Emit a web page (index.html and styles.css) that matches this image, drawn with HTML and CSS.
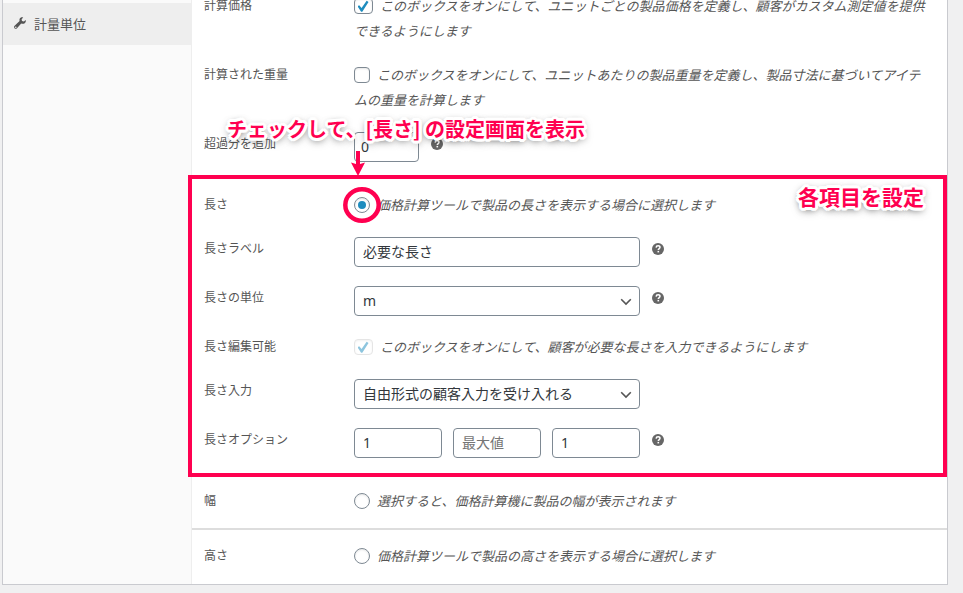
FILE: index.html
```html
<!DOCTYPE html>
<html lang="ja">
<head>
<meta charset="utf-8">
<title>計量単位</title>
<link rel="stylesheet" href="styles.css">
</head>
<body>
<svg class="defs" aria-hidden="true">
  <symbol id="help" viewBox="0 0 12 12">
    <circle cx="6" cy="6" r="6" fill="#666"/>
    <path d="M4.1 4.6C4.2 3.3 5 2.8 6.1 2.8c1.1 0 1.9.6 1.9 1.5C8 5.600 6.300 5.500 6.300 7" fill="none" stroke="#fff" stroke-width="1.500"/>
    <rect x="5.500" y="7.900" width="1.600" height="1.500" fill="#fff"/>
  </symbol>
  <symbol id="chevron" viewBox="0 0 12 8">
    <path d="M1.200 1.200L6 6l4.800-4.800" fill="none" stroke="#555" stroke-width="1.600"/>
  </symbol>
</svg>
<div class="panel">
  <nav class="tabs">
    <a class="tab" href="#measurement">
      <svg class="tab-icon" viewBox="0 0 12 12" aria-hidden="true">
        <path d="M11.700 3.100L9.900 4.600 8 4.100 7.600 2.300 9.200.500C7.900-.100 6.300.400 5.700 1.700c-.300.700-.300 1.500-.100 2.200L.600 8.800c-.700.700-.700 1.700-.100 2.400.700.700 1.800.700 2.500 0L7.200 6.500c1.200.600 2.800.400 3.800-.600.800-.800 1-1.900.700-2.800zM2.300 10.700a.7.7 0 1 1-1-1 .7.7 0 0 1 1 1z" fill="#555" fill-rule="evenodd"/>
      </svg>
      <span>計量単位</span>
    </a>
  </nav>
  <form class="main" id="measurement">
    <section class="group group-first">
      <div class="row">
        <label class="name" for="calc-price">計算価格</label>
        <div class="field"><input class="check check-wide" type="checkbox" id="calc-price" checked><span class="desc">このボックスをオンにして、ユニットごとの製品価格を定義し、顧客がカスタム測定値を提供できるようにします</span></div>
      </div>
      <div class="row">
        <label class="name" for="calc-weight">計算された重量</label>
        <div class="field"><input class="check" type="checkbox" id="calc-weight"><span class="desc">このボックスをオンにして、ユニットあたりの製品重量を定義し、製品寸法に基づいてアイテムの重量を計算します</span></div>
      </div>
      <div class="row">
        <label class="name" for="overage">超過分を追加</label>
        <div class="field controls">
          <input class="text text-short" type="text" id="overage" value="0">
          <svg class="help" aria-hidden="true"><use href="#help"/></svg>
        </div>
      </div>
    </section>

    <section class="group group-marked">
      <div class="row">
        <label class="name" for="length">長さ</label>
        <div class="field radio-field"><input class="radio" type="radio" name="dimension" id="length" checked><span class="desc">価格計算ツールで製品の長さを表示する場合に選択します</span>
          <svg class="ring" viewBox="0 0 38 36" aria-hidden="true"><ellipse cx="19" cy="18" rx="16.700" ry="15.700" fill="none" stroke="#ff0050" stroke-width="4.500"/></svg>
        </div>
      </div>
      <div class="row">
        <label class="name" for="length-label">長さラベル</label>
        <div class="field controls">
          <input class="text text-full" type="text" id="length-label" value="必要な長さ">
          <svg class="help" aria-hidden="true"><use href="#help"/></svg>
        </div>
      </div>
      <div class="row">
        <label class="name" for="length-unit">長さの単位</label>
        <div class="field controls">
          <span class="select-box"><select class="text text-full" id="length-unit"><option>m</option></select><svg class="chevron" aria-hidden="true"><use href="#chevron"/></svg></span>
          <svg class="help" aria-hidden="true"><use href="#help"/></svg>
        </div>
      </div>
      <div class="row">
        <label class="name" for="length-editable">長さ編集可能</label>
        <div class="field"><input class="check check-wide" type="checkbox" id="length-editable" checked disabled><span class="desc">このボックスをオンにして、顧客が必要な長さを入力できるようにします</span></div>
      </div>
      <div class="row">
        <label class="name" for="length-input">長さ入力</label>
        <div class="field controls">
          <span class="select-box"><select class="text text-full" id="length-input"><option>自由形式の顧客入力を受け入れる</option></select><svg class="chevron" aria-hidden="true"><use href="#chevron"/></svg></span>
        </div>
      </div>
      <div class="row">
        <label class="name" for="length-min">長さオプション</label>
        <div class="field controls">
          <span class="trio">
            <input class="text" type="text" id="length-min" value="1">
            <input class="text" type="text" aria-label="最大値" placeholder="最大値">
            <input class="text" type="text" aria-label="増分" value="1">
          </span>
          <svg class="help" aria-hidden="true"><use href="#help"/></svg>
        </div>
      </div>
      <p class="note note-check">チェックして、[長さ] の設定画面を表示</p>
      <svg class="arrow" viewBox="0 0 16 26" aria-hidden="true"><path d="M6 1h4v13l5-1.500-7 13.500-7-13.500L6 14z" fill="#ff0050"/></svg>
      <p class="note note-items">各項目を設定</p>
    </section>

    <section class="group group-single">
      <div class="row">
        <label class="name" for="width">幅</label>
        <div class="field"><input class="radio" type="radio" name="dimension" id="width"><span class="desc">選択すると、価格計算機に製品の幅が表示されます</span></div>
      </div>
    </section>

    <section class="group group-single">
      <div class="row">
        <label class="name" for="height">高さ</label>
        <div class="field"><input class="radio" type="radio" name="dimension" id="height"><span class="desc">価格計算ツールで製品の高さを表示する場合に選択します</span></div>
      </div>
    </section>
  </form>
</div>
</body>
</html>
```

FILE: styles.css
```css
* {
  box-sizing: border-box;
}

body {
  margin: 0;
  background: #f0f0f1;
  color: #555;
  font-family: "Noto Sans", "Noto Sans CJK JP", sans-serif;
  font-size: 12px;
}

.defs {
  position: absolute;
  width: 0;
  height: 0;
}

.panel {
  display: flex;
  margin: 0 15px 8px 2px;
  border: 1px solid #c9cacf;
  border-top: 0;
  background: #fff;
}

/* Sidebar */
.tabs {
  flex: 0 0 189px;
  padding-top: 3px;
  border-right: 1px solid #eee;
  background: #fafafa;
}

.tab {
  display: flex;
  align-items: center;
  gap: 8px;
  height: 42px;
  margin-right: -1px;
  padding: 0 0 2px 11px;
  background: #eee;
  color: #555;
  font-size: 13px;
  text-decoration: none;
}

.tab-icon {
  width: 12px;
  height: 12px;
}

/* Option groups */
.main {
  flex: 1;
  min-width: 0;
  padding-bottom: 1px;
}

.group {
  display: flex;
  flex-direction: column;
  gap: 19px;
  padding: 14px 20px 15px 12px;
  border-bottom: 2px solid #ddd;
}

.group-first {
  margin-top: -6px;
  padding-top: 0;
}

.group-single {
  padding-bottom: 14px;
}

.group:last-child {
  border-bottom: 0;
}

.row {
  display: grid;
  grid-template-columns: 150px 1fr;
}

.name {
  line-height: 24px;
}

.field {
  line-height: 25px;
}

.desc {
  font-size: 13px;
  font-style: italic;
}

.controls {
  display: flex;
  gap: 12px;
}

.help {
  width: 12px;
  height: 12px;
  margin-top: 6px;
}

/* Controls */
.text {
  width: 100%;
  height: 30px;
  margin: 0;
  padding: 0 8px 2px;
  border: 1px solid #7e8993;
  border-radius: 4px;
  background: #fff;
  color: #32373c;
  font-family: inherit;
  font-size: 14px;
  appearance: none;
}

.text::placeholder {
  color: #757575;
  opacity: 1;
}

.text-short {
  width: 65px;
  padding: 0 6px 2px;
}

.text-full,
.select-box,
.trio {
  width: 286px;
}

.select-box {
  position: relative;
  height: 30px;
  line-height: 0;
}

.chevron {
  position: absolute;
  top: 12px;
  right: 8px;
  width: 12px;
  height: 8px;
  pointer-events: none;
}

.trio {
  display: grid;
  grid-template-columns: repeat(3, 1fr);
  gap: 11px;
}

.check,
.radio {
  display: inline-grid;
  place-content: center;
  width: 16px;
  height: 16px;
  margin: 4px 7px 0 0;
  border: 1px solid #7e8993;
  border-radius: 4px;
  background: #fff;
  box-shadow: inset 0 1px 2px rgba(0, 0, 0, 0.1);
  vertical-align: top;
  appearance: none;
}

.check-wide {
  width: 19px;
}

.check:checked::before {
  content: "";
  width: 12px;
  height: 12px;
  background: #1e8cbe;
  clip-path: polygon(0 53%, 14% 44%, 34% 66%, 76% 6%, 92% 16%, 40% 97%, 30% 97%);
}

.check:disabled {
  opacity: 0.5;
  border-color: #ccc;
}

.radio {
  border-radius: 50%;
}

.radio:checked::before {
  content: "";
  width: 8px;
  height: 8px;
  border-radius: 50%;
  background: #1e8cbe;
}

/* Annotations lying over the form */
.group-marked,
.radio-field {
  position: relative;
}

.group-marked::before {
  content: "";
  position: absolute;
  inset: -4px 0 -4px -4px;
  border: 4px solid #ff0050;
  pointer-events: none;
}

.ring {
  position: absolute;
  top: -6px;
  left: -11px;
  width: 38px;
  height: 36px;
}

.arrow {
  position: absolute;
  top: -29px;
  left: 158px;
  width: 16px;
  height: 26px;
}

.note {
  position: absolute;
  margin: 0;
  color: #ff0050;
  font-family: "Noto Sans CJK JP", sans-serif;
  font-weight: 700;
  line-height: 30px;
  white-space: nowrap;
  text-shadow:
    2px 0 #fff, -2px 0 #fff, 0 2px #fff, 0 -2px #fff,
    2px 2px #fff, -2px 2px #fff, 2px -2px #fff, -2px -2px #fff,
    3px 1px #fff, -3px 1px #fff, 3px -1px #fff, -3px -1px #fff,
    1px 3px #fff, -1px 3px #fff, 1px -3px #fff, -1px -3px #fff,
    0 3px 8px rgba(0, 0, 0, 0.6), 0 1px 6px rgba(0, 0, 0, 0.5);
}

.note-check {
  top: -65px;
  left: 35px;
  font-size: 20px;
}

.note-items {
  top: 2px;
  right: 23px;
  font-size: 21px;
}
```
